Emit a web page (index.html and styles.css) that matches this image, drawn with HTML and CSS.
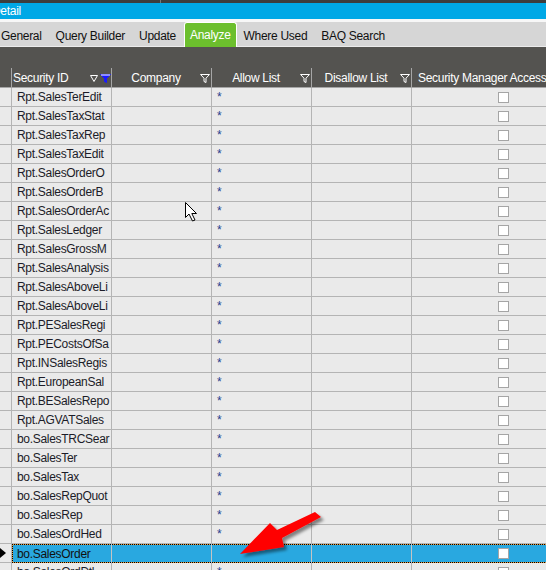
FILE: index.html
```html
<!DOCTYPE html>
<html>
<head>
<meta charset="utf-8">
<title>Detail - Analyze</title>
<link rel="stylesheet" href="styles.css">
</head>
<body>
<div class="screen">
  <div class="topstrip"><span class="tick"></span></div>
  <div class="titlebar"><span class="title">Detail</span></div>
  <div class="whiteline"></div>
  <div class="tabs">
    <span class="tab">General</span>
    <span class="tab">Query Builder</span>
    <span class="tab">Update</span>
    <span class="tab active">Analyze</span>
    <span class="tab">Where Used</span>
    <span class="tab">BAQ Search</span>
  </div>
  <div class="groupbar"></div>
  <div class="grid">
    <div class="hc rh"></div>
    <div class="hc first"><span class="ht-left">Security ID</span>
      <svg class="fsmall" width="8" height="7" viewBox="0 0 8 7"><path d="M0.5 0.5H7.5L4 6.5Z" fill="none" stroke="#fff" stroke-width="1"/></svg>
      <svg class="fblue" width="11" height="9" viewBox="0 0 11 9"><path d="M0.5 0.5H10.5L6.5 4.5V8.5L4.5 7.5V4.5Z" fill="#1a1aff" stroke="#1a1aff"/><path d="M1 1H10" stroke="#fff" stroke-width="1"/></svg>
    </div>
    <div class="hc"><span class="ht">Company</span><svg class="fun" width="10" height="9" viewBox="0 0 10 9"><path d="M0.5 0.5H9.5L6 4.2V8.5L4 7.5V4.2Z" fill="none" stroke="#fff"/></svg></div>
    <div class="hc"><span class="ht">Allow List</span><svg class="fun" width="10" height="9" viewBox="0 0 10 9"><path d="M0.5 0.5H9.5L6 4.2V8.5L4 7.5V4.2Z" fill="none" stroke="#fff"/></svg></div>
    <div class="hc"><span class="ht">Disallow List</span><svg class="fun" width="10" height="9" viewBox="0 0 10 9"><path d="M0.5 0.5H9.5L6 4.2V8.5L4 7.5V4.2Z" fill="none" stroke="#fff"/></svg></div>
    <div class="hc last"><span class="ht-left">Security Manager Access</span></div>

    <div class="c rh"></div><div class="c">Rpt.SalesTerEdit</div><div class="c"></div><div class="c ast">*</div><div class="c"></div><div class="c cb"><span class="box"></span></div>
    <div class="c rh"></div><div class="c">Rpt.SalesTaxStat</div><div class="c"></div><div class="c ast">*</div><div class="c"></div><div class="c cb"><span class="box"></span></div>
    <div class="c rh"></div><div class="c">Rpt.SalesTaxRep</div><div class="c"></div><div class="c ast">*</div><div class="c"></div><div class="c cb"><span class="box"></span></div>
    <div class="c rh"></div><div class="c">Rpt.SalesTaxEdit</div><div class="c"></div><div class="c ast">*</div><div class="c"></div><div class="c cb"><span class="box"></span></div>
    <div class="c rh"></div><div class="c">Rpt.SalesOrderO</div><div class="c"></div><div class="c ast">*</div><div class="c"></div><div class="c cb"><span class="box"></span></div>
    <div class="c rh"></div><div class="c">Rpt.SalesOrderB</div><div class="c"></div><div class="c ast">*</div><div class="c"></div><div class="c cb"><span class="box"></span></div>
    <div class="c rh"></div><div class="c">Rpt.SalesOrderAc</div><div class="c"></div><div class="c ast">*</div><div class="c"></div><div class="c cb"><span class="box"></span></div>
    <div class="c rh"></div><div class="c">Rpt.SalesLedger</div><div class="c"></div><div class="c ast">*</div><div class="c"></div><div class="c cb"><span class="box"></span></div>
    <div class="c rh"></div><div class="c">Rpt.SalesGrossM</div><div class="c"></div><div class="c ast">*</div><div class="c"></div><div class="c cb"><span class="box"></span></div>
    <div class="c rh"></div><div class="c">Rpt.SalesAnalysis</div><div class="c"></div><div class="c ast">*</div><div class="c"></div><div class="c cb"><span class="box"></span></div>
    <div class="c rh"></div><div class="c">Rpt.SalesAboveLi</div><div class="c"></div><div class="c ast">*</div><div class="c"></div><div class="c cb"><span class="box"></span></div>
    <div class="c rh"></div><div class="c">Rpt.SalesAboveLi</div><div class="c"></div><div class="c ast">*</div><div class="c"></div><div class="c cb"><span class="box"></span></div>
    <div class="c rh"></div><div class="c">Rpt.PESalesRegi</div><div class="c"></div><div class="c ast">*</div><div class="c"></div><div class="c cb"><span class="box"></span></div>
    <div class="c rh"></div><div class="c">Rpt.PECostsOfSa</div><div class="c"></div><div class="c ast">*</div><div class="c"></div><div class="c cb"><span class="box"></span></div>
    <div class="c rh"></div><div class="c">Rpt.INSalesRegis</div><div class="c"></div><div class="c ast">*</div><div class="c"></div><div class="c cb"><span class="box"></span></div>
    <div class="c rh"></div><div class="c">Rpt.EuropeanSal</div><div class="c"></div><div class="c ast">*</div><div class="c"></div><div class="c cb"><span class="box"></span></div>
    <div class="c rh"></div><div class="c">Rpt.BESalesRepo</div><div class="c"></div><div class="c ast">*</div><div class="c"></div><div class="c cb"><span class="box"></span></div>
    <div class="c rh"></div><div class="c">Rpt.AGVATSales</div><div class="c"></div><div class="c ast">*</div><div class="c"></div><div class="c cb"><span class="box"></span></div>
    <div class="c rh"></div><div class="c">bo.SalesTRCSear</div><div class="c"></div><div class="c ast">*</div><div class="c"></div><div class="c cb"><span class="box"></span></div>
    <div class="c rh"></div><div class="c">bo.SalesTer</div><div class="c"></div><div class="c ast">*</div><div class="c"></div><div class="c cb"><span class="box"></span></div>
    <div class="c rh"></div><div class="c">bo.SalesTax</div><div class="c"></div><div class="c ast">*</div><div class="c"></div><div class="c cb"><span class="box"></span></div>
    <div class="c rh"></div><div class="c">bo.SalesRepQuot</div><div class="c"></div><div class="c ast">*</div><div class="c"></div><div class="c cb"><span class="box"></span></div>
    <div class="c rh"></div><div class="c">bo.SalesRep</div><div class="c"></div><div class="c ast">*</div><div class="c"></div><div class="c cb"><span class="box"></span></div>
    <div class="c rh"></div><div class="c">bo.SalesOrdHed</div><div class="c"></div><div class="c ast">*</div><div class="c"></div><div class="c cb"><span class="box"></span></div>
    <div class="c rh cur"><svg width="7" height="10" viewBox="0 0 7 10"><path d="M0 0L6 5L0 10Z" fill="#000"/></svg></div><div class="c sel sel-first">bo.SalesOrder</div><div class="c sel"></div><div class="c sel"></div><div class="c sel"></div><div class="c sel cb"><span class="box"></span></div>
    <div class="c rh"></div><div class="c">bo.SalesOrdDtl</div><div class="c"></div><div class="c ast">*</div><div class="c"></div><div class="c cb"><span class="box"></span></div>
  </div>

  <svg class="overlay" width="546" height="570" viewBox="0 0 546 570">
    <defs>
      <filter id="sh" x="-20%" y="-20%" width="140%" height="140%">
        <feDropShadow dx="3" dy="3" stdDeviation="1.6" flood-color="#000" flood-opacity="0.45"/>
      </filter>
    </defs>
    <polygon points="315,512 277,530 270,523 240,554 284,547 282,538 321,517" fill="#ff0000" filter="url(#sh)"/>
    <path d="M185.5 202.5V217.5L189 214L192.5 221L195 220L191.8 213.5L196.5 213.5Z" fill="#fff" stroke="#000" stroke-width="1" stroke-linejoin="miter"/>
  </svg>
</div>
</body>
</html>
```

FILE: styles.css
```css
html, body {
  margin: 0;
  padding: 0;
}
body {
  width: 546px;
  height: 570px;
  overflow: hidden;
  background: #eaeaea;
  font-family: "Liberation Sans", Arial, sans-serif;
  font-size: 12px;
  letter-spacing: -0.3px;
}
.screen {
  position: relative;
  width: 546px;
  height: 570px;
  overflow: hidden;
}
.topstrip {
  height: 3px;
  background: #3d3d3d;
  display: flex;
  padding-left: 160px;
}
.tick {
  width: 1px;
  background: #777;
}
.titlebar {
  height: 16px;
  background: #00a8e6;
  color: #fff;
  line-height: 16px;
  white-space: nowrap;
  overflow: hidden;
}
.title {
  display: block;
  margin-left: -8px;
}
.whiteline {
  height: 3px;
  background: #f7f7f7;
}
.tabs {
  height: 25px;
  display: flex;
  align-items: stretch;
  background: linear-gradient(#d6d6d6 0 24px, #ececec 24px 25px);
  margin-left: -6px;
  white-space: nowrap;
}
.tab {
  box-sizing: border-box;
  padding: 5px 7px 0;
  line-height: 18px;
  color: #111;
}
.tab.active {
  background: #6cbf2d;
  color: #fff;
  border: 1px solid #fff;
  border-bottom: 0;
  border-radius: 3px 3px 0 0;
  padding: 3px 5px 0;
  margin: 0 0 0 1px;
}
.groupbar {
  height: 21px;
  background: #545350;
}
.grid {
  display: grid;
  grid-template-columns: 12px 100px 100px 100px 100px 184px;
  grid-template-rows: 20px;
  grid-auto-rows: 19px;
  width: 596px;
}
.hc {
  box-sizing: border-box;
  background: #545350;
  color: #fff;
  border-right: 1px solid #a6a6a6;
  border-bottom: 1px solid #a6a6a6;
  display: flex;
  align-items: center;
  padding-top: 1px;
  white-space: nowrap;
  overflow: hidden;
}
.ht {
  flex: 1;
  text-align: center;
}
.ht-left {
  padding-left: 1px;
}
.hc.last .ht-left {
  padding-left: 6px;
}
.fun {
  margin-right: 1px;
  flex: none;
}
.fsmall {
  margin-left: auto;
  flex: none;
}
.fblue {
  margin-left: 2px;
  margin-right: 0;
  flex: none;
}
.c {
  box-sizing: border-box;
  border-right: 1px solid #b4b4b4;
  border-bottom: 1px solid #b4b4b4;
  padding: 1px 0 0 5px;
  line-height: 17px;
  white-space: nowrap;
  overflow: hidden;
  color: #1c1c28;
}
.c.rh {
  padding: 0;
}
.c.ast {
  color: #26408c;
}
.c.cb {
  display: flex;
  justify-content: center;
  padding: 4px 0 0 0;
}
.box {
  box-sizing: border-box;
  width: 11px;
  height: 11px;
  border: 1px solid #a5a5a5;
  background: #fff;
}
.c.cur {
  display: flex;
  align-items: center;
  padding-left: 0;
}
.c.sel {
  border-bottom: 0;
  border-right-color: #c4c4c4;
  color: #111;
  padding-top: 2px;
  background:
    repeating-linear-gradient(90deg, #000 0 1px, #e89a3a 1px 2px) top left / 100% 1px no-repeat,
    repeating-linear-gradient(90deg, #000 0 1px, #e89a3a 1px 2px) bottom left / 100% 1px no-repeat,
    #29a8e0;
}
.c.sel.cb {
  padding-top: 4px;
}
.c.sel-first {
  background:
    repeating-linear-gradient(90deg, #000 0 1px, #e89a3a 1px 2px) top left / 100% 1px no-repeat,
    repeating-linear-gradient(90deg, #000 0 1px, #e89a3a 1px 2px) bottom left / 100% 1px no-repeat,
    repeating-linear-gradient(0deg, #000 0 1px, #e89a3a 1px 2px) top left / 1px 100% no-repeat,
    #29a8e0;
}
.overlay {
  position: absolute;
  left: 0;
  top: 0;
  pointer-events: none;
}
```
